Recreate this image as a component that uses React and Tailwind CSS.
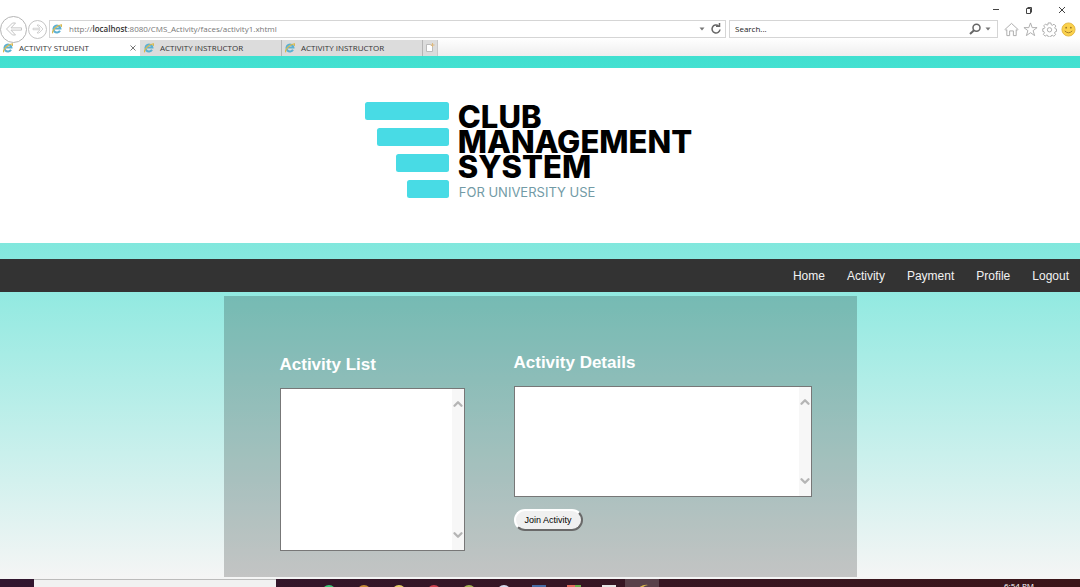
import React from "react";
import { ChevronUp, ChevronDown } from "lucide-react";

function ExplorerIcon() {
  return (
    <svg viewBox="0 0 20 20" className="size-[10px] shrink-0" aria-hidden="true">
      <path d="M16 13.5a7 7 0 1 1 .8-4.5H6" fill="none" stroke="#5cb0d2" strokeWidth="4" />
      <path d="M1.5 18.5C-1 15 8 3 18.5 1.5c1.500 1 .5 3-.5 4" fill="none" stroke="#d9b84f" strokeWidth="2.500" />
    </svg>
  );
}

function Arrow({ flip }) {
  return flip ? (
    <svg viewBox="0 0 24 24" className="size-3 shrink-0" fill="none" stroke="#c4c4c4" strokeWidth="1.500" aria-hidden="true">
      <path d="M2 10.500h14l-6-6.500h4l8 8-8 8h-4l6-6.500H2z" />
    </svg>
  ) : (
    <svg viewBox="0 0 24 24" className="size-[18px] shrink-0" fill="none" stroke="#c4c4c4" strokeWidth="1.300" aria-hidden="true">
      <path d="M22 10.500H8l6-6.500h-4l-8 8 8 8h4l-6-6.500h14z" />
    </svg>
  );
}

function WindowBar() {
  return (
    <div className="flex h-5 items-center justify-end gap-[25px] pr-[14px] text-[#444]">
      <button aria-label="Minimize">
        <svg viewBox="0 0 8 8" className="size-2" stroke="currentColor"><path d="M1 3.500h6" /></svg>
      </button>
      <button aria-label="Restore">
        <svg viewBox="0 0 8 8" className="size-2" fill="none" stroke="currentColor">
          <path d="M1.500 2.500h4v5h-4zM2.500 1.500h4v5" />
        </svg>
      </button>
      <button aria-label="Close">
        <svg viewBox="0 0 8 8" className="size-2" stroke="currentColor"><path d="M1 1l6 6M7 1L1 7" /></svg>
      </button>
    </div>
  );
}

function Caret() {
  return (
    <svg viewBox="0 0 6 4" className="h-1 w-[6px]" fill="#777" aria-hidden="true"><path d="M.5.500h5L3 3.500z" /></svg>
  );
}

function Toolbar() {
  return (
    <div className="flex h-[18px] items-center pr-1 text-[8px]">
      <button aria-label="Back" className="relative z-10 flex size-[27px] shrink-0 items-center justify-center rounded-full border border-[#b5b5b5] bg-white"><Arrow /></button>
      <button aria-label="Forward" className="ml-px flex size-[19px] shrink-0 items-center justify-center rounded-full border border-[#c4c4c4] bg-white"><Arrow flip /></button>
      <div className="ml-[2px] flex h-[18px] flex-1 items-center border border-[#d5d5d5] pr-[3px] pl-[2px]">
        <ExplorerIcon />
        <div className="relative ml-[7px] flex h-4 flex-1 items-center">
          <input aria-label="Address" defaultValue="http://localhost:8080/CMS_Activity/faces/activity1.xhtml" className="absolute inset-0 w-full text-transparent caret-black outline-none" />
          <span aria-hidden="true" className="pointer-events-none relative text-[#777]">
            http://<b className="font-semibold text-[#333]">localhost</b>:8080/CMS_Activity/faces/activity1.xhtml
          </span>
        </div>
        <button aria-label="Address history" className="mr-[5px]"><Caret /></button>
        <button aria-label="Refresh">
          <svg viewBox="0 0 12 12" className="size-3" fill="none" stroke="#666" strokeWidth="1.5">
            <path d="M8.500 2.800A4 4 0 1 0 10 6.500" /><path d="M6 3.300h3.500V0" />
          </svg>
        </button>
      </div>
      <div className="ml-[3px] flex h-[18px] w-1/4 items-center border border-[#d5d5d5] pr-[6px] pl-[5px]">
        <input aria-label="Search" placeholder="Search..." className="min-w-0 flex-1 outline-none placeholder:text-[#222]" />
        <button aria-label="Run search">
          <svg viewBox="0 0 12 12" className="size-3" fill="none" stroke="#666" strokeWidth="1.5">
            <circle cx="7.500" cy="4.800" r="3.500" /><path d="M5 7.300L1 11" strokeWidth="2" />
          </svg>
        </button>
        <button aria-label="Search options" className="ml-1"><Caret /></button>
      </div>
      <div className="ml-[6px] flex items-center gap-1 text-[#aaa]">
        <button aria-label="Home page">
          <svg viewBox="0 0 16 16" className="size-[15px]" fill="none" stroke="currentColor">
            <path d="M1 8l7-6.500L15 8l-1 1-1-.8v6.300h-3v-5H6v5H3V8.200L2 9z" />
          </svg>
        </button>
        <button aria-label="Favorites">
          <svg viewBox="0 0 16 16" className="size-[15px]" fill="none" stroke="currentColor">
            <path d="M8 1l1.800 5h5.200l-4.200 3.200 1.600 5.300L8 11.400l-4.400 3.100 1.600-5.300L1 6h5.200z" />
          </svg>
        </button>
        <button aria-label="Tools">
          <svg viewBox="0 0 16 16" className="size-[15px]" fill="none" stroke="currentColor">
            <path d="M6.500 1h3l.4 2 1.200.5 1.700-1.200 2 2-1.200 1.800.5 1.100 1.400.3v2.500l-1.600.5-.5 1.200 1.100 1.700-1.900 1.800-1.700-1.100-1.200.5-.4 1.400H6.700l-.5-1.600-1.200-.4-1.700 1.100-1.900-1.900 1.200-1.700-.5-1.200L.8 10V7.200l1.700-.4.500-1.100-1.200-1.600 1.900-1.900 1.700 1.100 1-.4z" />
            <circle cx="8" cy="8.300" r="2.300" />
          </svg>
        </button>
        <button aria-label="Feedback">
          <svg viewBox="0 0 16 16" className="size-[15px]">
            <circle cx="8" cy="8" r="7" fill="#fbd24c" stroke="#e3b844" />
            <circle cx="5.500" cy="6" r="1" fill="#a07a2b" /><circle cx="10.500" cy="6" r="1" fill="#a07a2b" />
            <path d="M4 9.500q4 4 8 0" fill="none" stroke="#a07a2b" />
          </svg>
        </button>
      </div>
    </div>
  );
}

function Tabs() {
  const base = "flex h-full items-center border-r pr-1 pl-[3px] ";
  return (
    <div className="flex h-[18px] items-center bg-linear-to-b from-white to-[#eeeeee] pt-[2px] text-[8px] text-[#333]">
      <div className={base + "w-[141px] border-[#dcdcdc] bg-white"}>
        <ExplorerIcon />
        <button className="ml-[6px] flex-1 text-left">ACTIVITY STUDENT</button>
        <button aria-label="Close tab">
          <svg viewBox="0 0 6 6" className="size-[6px]" stroke="#777"><path d="M.5.500l5 5M5.500.500l-5 5" /></svg>
        </button>
      </div>
      {[1, 2].map((n) => (
        <div key={n} className={base + "w-[141px] border-[#b5b5b5] bg-[#dcdcdc]"}>
          <ExplorerIcon />
          <button className="ml-[6px] flex-1 text-left">ACTIVITY INSTRUCTOR</button>
        </div>
      ))}
      <button aria-label="New tab" className="flex h-full w-[15px] items-center justify-center border-r border-[#c8c8c8] bg-[#dcdcdc]">
        <svg viewBox="0 0 10 10" className="size-[10px]"><path d="M1.500 1.500h4l2 2v5h-6z" fill="#fff" stroke="#bbb" /><path d="M7.500 0v4M5.500 2h4" stroke="#dfb97c" /></svg>
      </button>
    </div>
  );
}

function Logo() {
  return (
    <div className="flex h-[175px] justify-center bg-white pt-[33px] pr-6">
      <svg viewBox="0 0 86 99" className="h-[99px] w-[86px]" fill="#48dbe5" aria-hidden="true">
        <rect x="1" y="1" width="84" height="18" rx="2.500" />
        <rect x="13" y="27" width="72" height="18" rx="2.500" />
        <rect x="32" y="53" width="53" height="18" rx="2.500" />
        <rect x="43" y="79" width="42" height="18" rx="2.500" />
      </svg>
      <div className="ml-2 pt-[3px] font-['Inter',sans-serif]">
        <h1 className="text-[31px] leading-[25px] font-extrabold text-black">
          CLUB<br />MANAGEMENT<br />SYSTEM
        </h1>
        <p className="pt-[3px] pl-px text-[13px] leading-5 text-[#729ba6]">FOR UNIVERSITY USE</p>
      </div>
    </div>
  );
}

function ScrollGutter() {
  return (
    <div className="flex w-3 shrink-0 flex-col items-center justify-between bg-[#f7f7f7] py-2 text-[#b5b5b5]" aria-hidden="true">
      <ChevronUp className="size-[14px]" strokeWidth={4} />
      <ChevronDown className="size-[14px]" strokeWidth={4} />
    </div>
  );
}

function Taskbar() {
  const icons = ["#3cc878", "#c58a35", "#e6cf68", "#ce414e", "#a4b453", "#d6dbee", "#466ca5", "#e36c5d", "#e5e5e5"];
  return (
    <footer className="flex h-2 items-start overflow-hidden bg-linear-to-r from-[#31162f] to-[#3b1519]">
      <div className="h-2 w-[34px]" />
      <input aria-label="Search Windows" className="h-2 w-[242px] border-t border-[#bbb] bg-[#f1f1f1]" />
      <div className="flex items-start gap-[21px] pt-[6px] pl-[46px]">
        {icons.map((color, i) => (
          <svg key={color} viewBox="0 0 14 14" className="size-[14px] shrink-0" aria-hidden="true">
            {i < 6 ? (
              <circle cx="7" cy="7" r="7" fill={color} />
            ) : (
              <path d="M0 0h14v14H0z" fill={color} />
            )}
            {i === 7 && <path d="M8 0h6v14H8z" fill="#6eaf4c" />}
          </svg>
        ))}
      </div>
      <div className="ml-[9px] flex h-2 w-[34px] justify-center bg-[#59414a] pt-[5px]">
        <svg viewBox="0 0 14 14" className="size-[14px] shrink-0" aria-hidden="true"><path d="M1 6q6-6 12-5-6 1-6 5" fill="#d9b84f" /></svg>
      </div>
      <time className="ml-auto w-[76px] pt-[2px] text-[8px] leading-[10px] text-white">6:54 PM</time>
    </footer>
  );
}

export default function App() {
  return (
    <div className="flex min-h-screen flex-col bg-white font-['Open_Sans',sans-serif]">
      <header>
        <WindowBar />
        <Toolbar />
        <Tabs />
      </header>
      <main className="flex-1 bg-[linear-gradient(#40e0d0,#f5f5f5)] pt-[12px] font-['Liberation_Sans',sans-serif]">
        <Logo />
        <nav className="mt-4 flex h-[33px] items-center justify-end gap-[22px] bg-[#333] pr-[11px] text-[12px] text-[#f2f2f2]">
          {["Home", "Activity", "Payment", "Profile", "Logout"].map((item) => (
            <a key={item} href={"#" + item.toLowerCase()}>{item}</a>
          ))}
        </nav>
        <section className="mx-auto mt-1 mb-[2px] flex w-[633px] max-w-full items-start gap-[49px] bg-black/20 px-14 pt-14 pb-[26px]">
          <div className="pt-[2px]">
            <label htmlFor="activities" className="block text-[17px] leading-[22px] font-bold text-white">Activity List</label>
            <div className="mt-3 flex h-[163px] w-[185px] border border-[#777] bg-white">
              <select id="activities" size={4} className="min-w-0 flex-1 appearance-none overflow-hidden outline-none" />
              <ScrollGutter />
            </div>
          </div>
          <div>
            <label htmlFor="details" className="block text-[17px] leading-[22px] font-bold text-white">Activity Details</label>
            <div className="mt-3 flex h-[111px] w-[298px] border border-[#777] bg-white">
              <textarea id="details" className="min-w-0 flex-1 resize-none overflow-hidden outline-none" />
              <ScrollGutter />
            </div>
            <button className="mt-3 h-[22px] rounded-full border-2 border-t-white border-r-[#696969] border-b-[#696969] border-l-white bg-[#f0f0f0] px-[9px] text-[9px] leading-none text-black">Join Activity</button>
          </div>
        </section>
      </main>
      <Taskbar />
    </div>
  );
}
